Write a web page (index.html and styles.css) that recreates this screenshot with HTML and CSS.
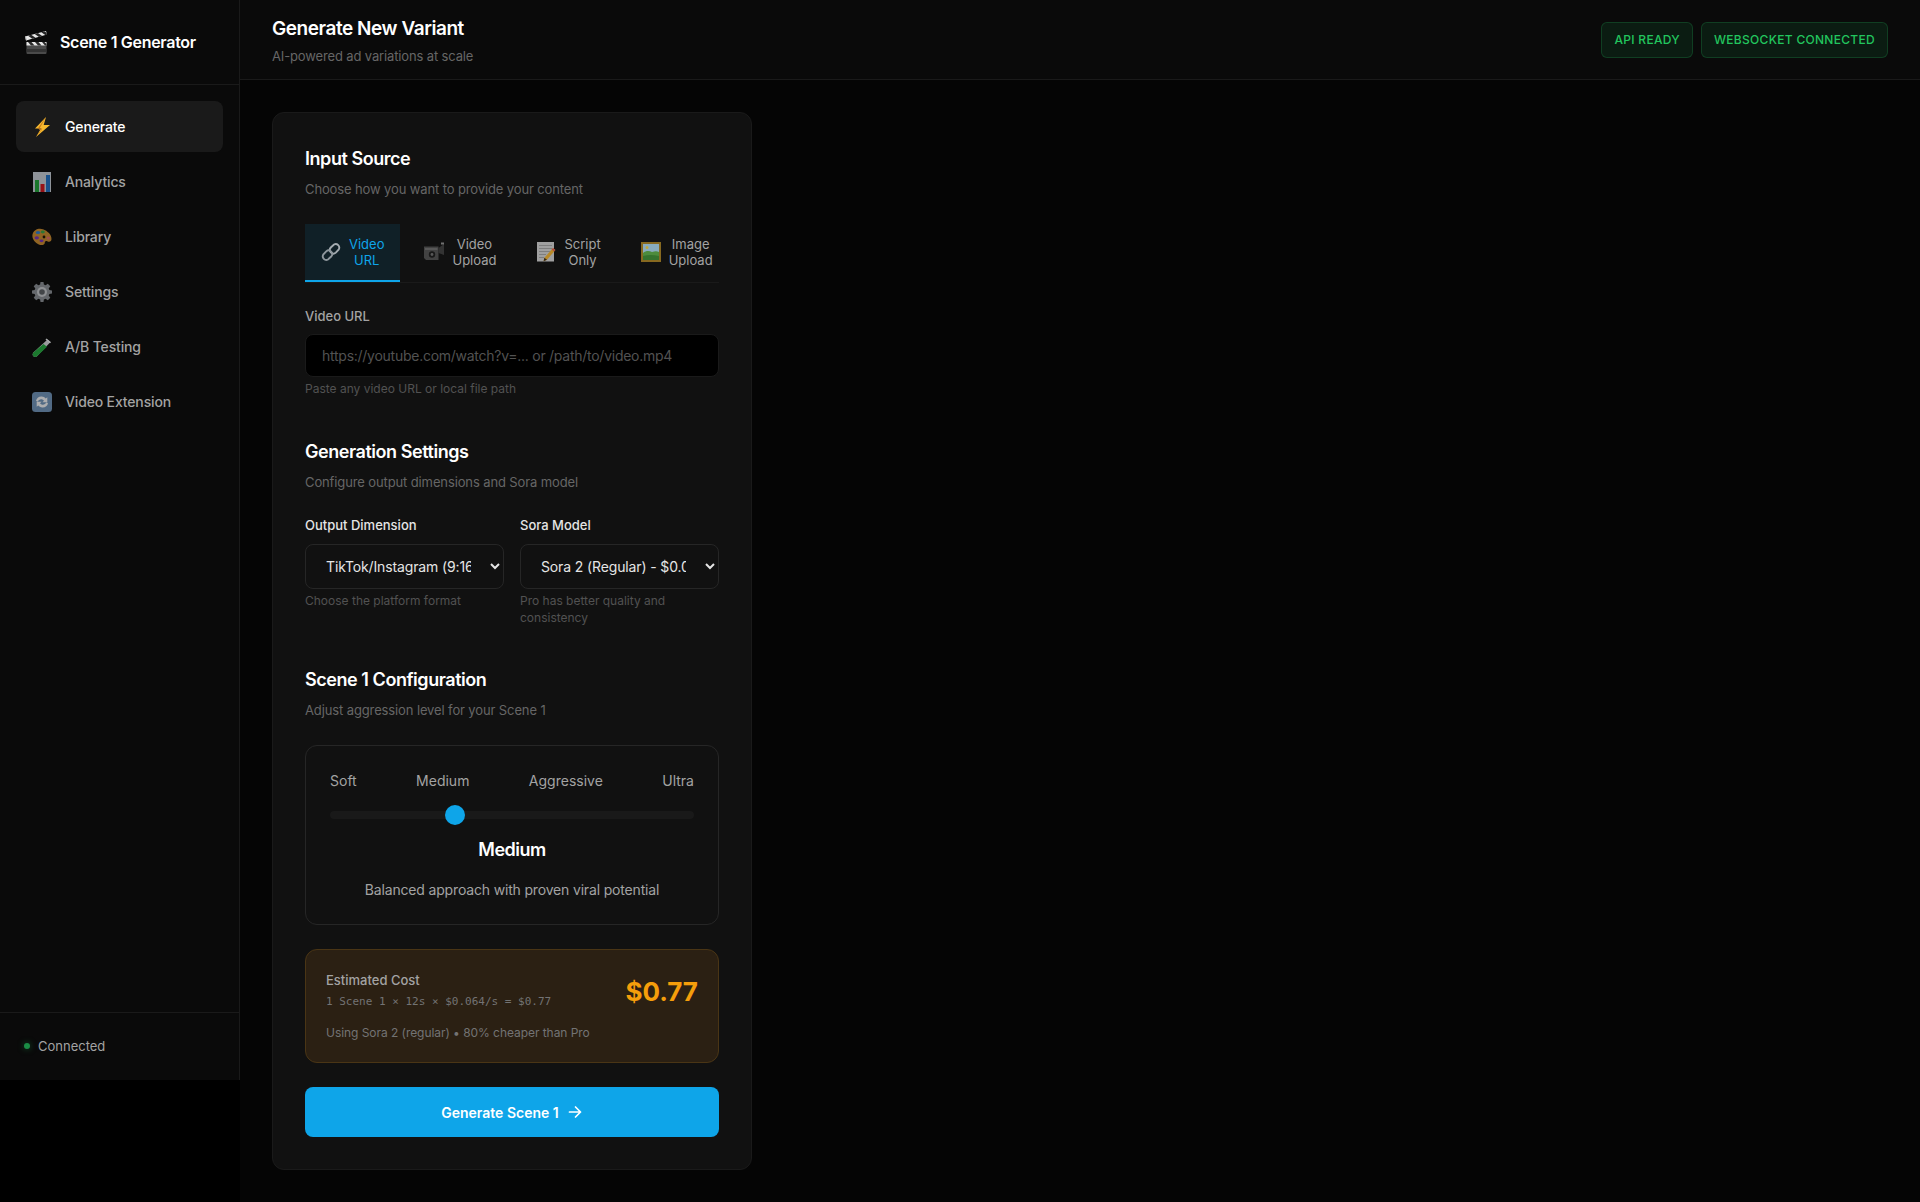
FILE: index.html
```html
<!DOCTYPE html>
<html lang="en">
<head>
<meta charset="utf-8">
<title>Scene 1 Generator</title>
<link rel="stylesheet" href="styles.css">
</head>
<body>
<div class="app">
  <aside class="sidebar">
    <div class="brand">
      <svg class="brand-icon" viewBox="0 0 24 24" aria-hidden="true">
        <rect x="2.500" y="12" width="20" height="12" rx="1" fill="#4a4a4a"/>
        <rect x="2.500" y="19" width="20" height="3" fill="#333"/>
        <rect x="2.500" y="12" width="20" height="3.500" fill="#e6e6e6"/>
        <path d="M4 12l3 3.500h3.500l-3-3.500zM11 12l3 3.500h3.500l-3-3.500zM18 12l3 3.500h1.500v-1.500l-2-2z" fill="#2a2a2a"/>
        <path d="M1 6.500L22 1l1 3.600L2 10.500z" fill="#e8e8e8"/>
        <path d="M4 5.700l4.300 3 3.200-.9-4.300-3zM10.700 3.900l4.300 3 3.200-.9-4.300-3zM17.300 2.200l4.300 3 1.400-.4-.5-2.100-1.800-1.300z" fill="#262626"/>
        <path d="M1 6.500l1 4 .8-.2-1-4.100z" fill="#aaa"/>
      </svg>
      <span class="brand-name">Scene 1 Generator</span>
    </div>
    <nav class="nav">
      <a class="nav-item is-active">
        <svg class="nav-icon" viewBox="0 0 20 20" aria-hidden="true"><path d="M14 0L3 11.500h6L4 20 18 8h-6.300z" fill="#f5b82e"/><path d="M14 0L5.800 11.500h4.400L4 20 9.900 12.800H6.800z" fill="#c9781a"/></svg>
        <span>Generate</span>
      </a>
      <a class="nav-item">
        <svg class="nav-icon" viewBox="0 0 20 20" aria-hidden="true"><rect x="1" y="0" width="18" height="20" fill="#c7ced6"/><rect x="3" y="8" width="4" height="12" fill="#22a53a"/><rect x="8.500" y="12" width="4" height="8" fill="#d2161e"/><rect x="14" y="3" width="4" height="17" fill="#1f6fc4"/></svg>
        <span>Analytics</span>
      </a>
      <a class="nav-item">
        <svg class="nav-icon" viewBox="0 0 20 20" aria-hidden="true"><path d="M.5 7.500C1.500 2.500 7 .8 11 2.300c4.500 1.700 8.500 5.200 8.500 9.700 0 2.800-2.300 3.300-4.300 2.200-1.400-.8-2.400.2-2.400 1.500 0 2.300-3.300 2.900-6 1.800C3 15.800-.3 12 .5 7.500z" fill="#c98a2e"/><ellipse cx="6" cy="5.500" rx="2.200" ry="1.600" fill="#2a7fd0"/><ellipse cx="10.800" cy="5" rx="2" ry="1.400" fill="#3aa648"/><ellipse cx="4.800" cy="10.800" rx="2.200" ry="1.600" fill="#7a35b5"/><ellipse cx="9.500" cy="13.800" rx="2" ry="1.400" fill="#7a35b5"/><ellipse cx="16.200" cy="11" rx="1.700" ry="1.600" fill="#e0696e"/><circle cx="12" cy="10" r="1.400" fill="#1a1205"/></svg>
        <span>Library</span>
      </a>
      <a class="nav-item">
        <svg class="nav-icon" viewBox="0 0 20 20" aria-hidden="true"><path d="M8.500 0h3l.4 2.600 1.700.7L15.800 1.700l2.500 2.500-1.600 2.200.7 1.700 2.600.4v3l-2.600.4-.7 1.700 1.600 2.200-2.500 2.500-2.200-1.600-1.700.7-.4 2.600h-3l-.4-2.600-1.700-.7-2.200 1.600-2.500-2.500 1.600-2.200-.7-1.700L0 11.500v-3l2.600-.4.7-1.700L1.700 4.200l2.500-2.500 2.200 1.600 1.700-.7z" fill="#8a8f94"/><circle cx="10" cy="10" r="5" fill="#c5c8cc"/><circle cx="10" cy="10" r="2.800" fill="#5a5e63"/></svg>
        <span>Settings</span>
      </a>
      <a class="nav-item">
        <svg class="nav-icon" viewBox="0 0 20 20" aria-hidden="true"><path d="M15.500 2.500l3 2.500L5 19.200c-1 1-2.500 1-3.600 0-1-1-1-2.500 0-3.600z" fill="#d7dadd"/><path d="M11.500 7l3.500 2.700L5 19.200c-1 1-2.500 1-3.600 0-1-1-1-2.500 0-3.600z" fill="#23a83e"/><path d="M14.500 1.500l4.500 3.700-1 1-4.500-3.700z" fill="#eceff1"/></svg>
        <span>A/B Testing</span>
      </a>
      <a class="nav-item">
        <svg class="nav-icon" viewBox="0 0 20 20" aria-hidden="true"><rect width="20" height="20" rx="3.500" fill="#6f93b8"/><path d="M4 9c.4-3 3-4.800 5.800-4.500 1.600.1 3 .9 3.900 2l1.600-1.300v5h-5l1.700-1.500c-.6-.8-1.400-1.300-2.400-1.400-1.700-.2-3.200.8-3.600 2.200zM16 11c-.4 3-3 4.800-5.800 4.500-1.600-.1-3-.9-3.900-2l-1.600 1.300v-5h5l-1.700 1.500c.6.8 1.400 1.300 2.400 1.400 1.700.2 3.200-.8 3.600-2.200z" fill="#f1f3f5"/></svg>
        <span>Video Extension</span>
      </a>
    </nav>
    <div class="sidebar-footer">
      <span class="status-dot"></span>
      <span>Connected</span>
    </div>
  </aside>

  <div class="main">
    <header class="topbar">
      <div>
        <h1 class="page-title">Generate New Variant</h1>
        <p class="page-sub">AI-powered ad variations at scale</p>
      </div>
      <div class="badges">
        <span class="badge">API Ready</span>
        <span class="badge">WebSocket Connected</span>
      </div>
    </header>

    <main class="content">
      <form class="card">
        <section class="section">
          <h2 class="section-title">Input Source</h2>
          <p class="section-desc">Choose how you want to provide your content</p>
          <div class="tabs">
            <button type="button" class="tab is-active">
              <svg class="tab-icon" viewBox="0 0 20 20" aria-hidden="true"><g fill="none" stroke-linecap="round"><path d="M13 2.500a3.600 3.600 0 0 1 4.800 4.900l-3 3.200a3.600 3.600 0 0 1-5-.2 3.600 3.600 0 0 1 0-4.900z" stroke="#c9ced3" stroke-width="1.900"/><path d="M7 17.500a3.600 3.600 0 0 1-4.800-4.900l3-3.200a3.600 3.600 0 0 1 5 .2 3.600 3.600 0 0 1 0 4.900z" stroke="#aeb4ba" stroke-width="1.900"/></g></svg>
              <span>Video URL</span>
            </button>
            <button type="button" class="tab">
              <svg class="tab-icon" viewBox="0 0 20 20" aria-hidden="true"><path d="M0 4.500h14.500v13.500H2l-2-2z" fill="#4f4f4f"/><path d="M14.500 6L20 2v11l-5.500-2z" fill="#3c3c3c"/><rect x="1" y="6" width="12.500" height="2" fill="#6a6a6a"/><circle cx="8" cy="12.500" r="3.200" fill="#1c1c1c"/><circle cx="8" cy="12.500" r="1.400" fill="#6a6a6a"/><rect x="17" y="0.500" width="3" height="2" fill="#8a8a8a"/></svg>
              <span>Video Upload</span>
            </button>
            <button type="button" class="tab">
              <svg class="tab-icon" viewBox="0 0 20 20" aria-hidden="true"><rect x="1" y="0" width="17" height="19.500" fill="#c4c4c4"/><path d="M3 3.500h13M3 6.500h13M3 9.500h11M3 12.500h7M3 15.500h5" stroke="#8f8f8f" stroke-width=".8"/><path d="M17 6l2.400 2-8.400 9.700-3.400 1.500.8-3.400z" fill="#e2a72e"/><path d="M17 6l2.400 2-1.300 1.500-2.400-2z" fill="#d4574e"/><path d="M7.600 19.200l.8-3.400 2.600 1.900z" fill="#3a2c1c"/></svg>
              <span>Script Only</span>
            </button>
            <button type="button" class="tab">
              <svg class="tab-icon" viewBox="0 0 20 20" aria-hidden="true"><rect y="0" width="20" height="20" fill="#a57f24"/><rect x="2" y="2" width="16" height="16" fill="#a8d3ea"/><circle cx="6" cy="5.500" r="1.500" fill="#ecd04a"/><path d="M2 11c3-2.500 6-2.500 9-1 3-1 5-1 7 0v8H2z" fill="#5cab48"/><path d="M2 14c5-1.500 10-1.500 16 0v4H2z" fill="#3f8c36"/></svg>
              <span>Image Upload</span>
            </button>
          </div>
          <div class="field">
            <label class="field-label" for="video-url">Video URL</label>
            <input class="text-input" id="video-url" type="text" placeholder="https://youtube.com/watch?v=... or /path/to/video.mp4">
            <p class="hint">Paste any video URL or local file path</p>
          </div>
        </section>

        <section class="section">
          <h2 class="section-title">Generation Settings</h2>
          <p class="section-desc">Configure output dimensions and Sora model</p>
          <div class="field-grid">
            <div class="field">
              <label class="field-label field-label-strong" for="dim">Output Dimension</label>
              <select class="select" id="dim"><option>TikTok/Instagram (9:16)</option></select>
              <p class="hint">Choose the platform format</p>
            </div>
            <div class="field">
              <label class="field-label field-label-strong" for="model">Sora Model</label>
              <select class="select" id="model"><option>Sora 2 (Regular) - $0.064/s</option></select>
              <p class="hint">Pro has better quality and consistency</p>
            </div>
          </div>
        </section>

        <section class="section">
          <h2 class="section-title">Scene 1 Configuration</h2>
          <p class="section-desc">Adjust aggression level for your Scene 1</p>
          <div class="level-box">
            <div class="level-labels">
              <span>Soft</span><span>Medium</span><span>Aggressive</span><span>Ultra</span>
            </div>
            <input class="slider" type="range" min="0" max="3" step="1" value="1" aria-label="Aggression level">
            <div class="level-value">Medium</div>
            <p class="level-desc">Balanced approach with proven viral potential</p>
          </div>
          <div class="cost-box">
            <div class="cost-row">
              <div>
                <div class="cost-title">Estimated Cost</div>
                <div class="cost-formula">1 Scene 1 × 12s × $0.064/s = $0.77</div>
              </div>
              <div class="cost-amount">$0.77</div>
            </div>
            <p class="cost-note">Using Sora 2 (regular) • 80% cheaper than Pro</p>
          </div>
          <button type="button" class="generate">
            <span>Generate Scene 1</span>
            <svg class="generate-arrow" viewBox="0 0 16 16" aria-hidden="true"><path d="M2.500 8h11M8.500 3l5 5-5 5" fill="none" stroke="#fff" stroke-width="1.700" stroke-linecap="round" stroke-linejoin="round"/></svg>
          </button>
        </section>
      </form>
    </main>
  </div>
</div>
</body>
</html>
```

FILE: styles.css
```css
* { box-sizing: border-box; }
html, body { margin: 0; padding: 0; background: #000; }
body { font-family: Inter, "Noto Sans", sans-serif; font-size: 14px; line-height: 1.5; color: #fff; }
h1, h2, p { margin: 0; }

.app { display: flex; align-items: flex-start; min-height: 1202px; }

.sidebar { width: 240px; height: 1080px; flex: none; display: flex; flex-direction: column; background: #0a0a0a; border-right: 1px solid #1a1a1a; }
.brand { height: 85px; display: flex; align-items: center; gap: 12px; padding: 0 24px; border-bottom: 1px solid #1a1a1a; }
.brand-icon { width: 24px; height: 24px; flex: none; }
.brand-name { font-size: 16px; font-weight: 600; letter-spacing: -.3px; }
.nav { flex: 1; display: flex; flex-direction: column; gap: 4px; padding: 16px; }
.nav-item { display: flex; align-items: center; gap: 13px; height: 51px; padding: 0 16px; border-radius: 8px; color: #a3a3a3; font-weight: 500; letter-spacing: -.15px; }
.nav-item.is-active { background: #1a1a1a; color: #fff; }
.nav-icon { width: 20px; height: 20px; flex: none; opacity: .7; }
.is-active .nav-icon { opacity: 1; }
.sidebar-footer { display: flex; align-items: center; gap: 8px; padding: 24px; border-top: 1px solid #1a1a1a; font-size: 13px; color: #a3a3a3; }
.status-dot { width: 6px; height: 6px; border-radius: 50%; background: #22c55e; opacity: .7; box-shadow: 0 0 6px rgba(34,197,94,.6); }

.main { flex: 1; min-width: 0; min-height: 1202px; background: #050505; }
.topbar { height: 80px; display: flex; justify-content: space-between; align-items: center; padding: 0 32px; background: #0a0a0a; border-bottom: 1px solid #1a1a1a; }
.page-title { font-size: 19px; font-weight: 600; line-height: 30px; letter-spacing: -.45px; margin-top: 1px; }
.page-sub { font-size: 13px; color: #666; margin-top: 3px; letter-spacing: -.14px; }
.badges { display: flex; gap: 8px; }
.badge { height: 36px; display: flex; align-items: center; padding: 0 12px; border: 1px solid rgba(34,197,94,.2); border-radius: 6px; background: rgba(34,197,94,.1); color: #22c55e; font-size: 12px; font-weight: 500; letter-spacing: .3px; text-transform: uppercase; }

.content { padding: 32px; }
.card { width: 480px; padding: 32px; background: #111; border: 1px solid #1a1a1a; border-radius: 12px; }
.section + .section { margin-top: 40px; }
.section-title { font-size: 18px; font-weight: 600; line-height: 1.5; margin-bottom: 8px; letter-spacing: -.45px; }
.section-desc { font-size: 13px; color: #666; margin-bottom: 24px; letter-spacing: -.12px; }

.tabs { display: flex; gap: 8px; border-bottom: 1px solid #1a1a1a; margin-bottom: 24px; }
.tab { flex: 1; display: flex; align-items: center; justify-content: center; gap: 8px; padding: 12px 16px; border: 0; border-bottom: 2px solid transparent; background: none; color: #a3a3a3; font: 400 13px/16px Inter, sans-serif; text-align: center; }
.tab.is-active { background: rgba(14,165,233,.1); border-bottom-color: #0ea5e9; color: #0ea5e9; }
.tab-icon { width: 20px; height: 20px; flex: none; opacity: .8; }

.field-label { display: block; font-size: 13px; font-weight: 500; color: #a3a3a3; margin-bottom: 8px; }
.field-label-strong { color: #e5e5e5; }
.text-input { display: block; width: 100%; padding: 12px 16px; background: #000; border: 1px solid #1a1a1a; border-radius: 8px; color: #fff; font: 400 14px Inter, sans-serif; letter-spacing: -.26px; outline: 0; }
.text-input::placeholder { color: #525252; opacity: 1; }
.hint { font-size: 12px; line-height: 1.4; color: #525252; margin-top: 4px; }

.field-grid { display: grid; grid-template-columns: 1fr 1fr; gap: 16px; }
.field-grid .field { min-width: 0; }
.select { display: block; width: 100%; height: 45px; padding: 12px 16px; color-scheme: dark; background: #111; border: 1px solid #262626; border-radius: 8px; color: #e5e5e5; font: 400 14px Inter, sans-serif; letter-spacing: -.13px; }

.level-box { padding: 24px; border: 1px solid #262626; border-radius: 12px; margin-bottom: 24px; }
.level-labels { display: flex; justify-content: space-between; color: #a3a3a3; margin-bottom: 14px; }
.slider { display: block; width: 100%; height: 20px; margin: 0 0 11px; padding: 0; background: none; appearance: none; -webkit-appearance: none; }
.slider::-webkit-slider-runnable-track { height: 8px; border-radius: 4px; background: #191919; }
.slider::-webkit-slider-thumb { -webkit-appearance: none; appearance: none; width: 20px; height: 20px; margin-top: -6px; border-radius: 50%; background: #0ea5e9; }
.level-value { font-size: 18px; font-weight: 600; text-align: center; margin-bottom: 16px; letter-spacing: -.5px; }
.level-desc { color: #a3a3a3; text-align: center; letter-spacing: -.17px; }

.cost-box { padding: 21.500px 20px 20px; background: #2b2013; border: 1px solid #4a3515; border-radius: 12px; margin-bottom: 24px; }
.cost-row { display: flex; justify-content: space-between; align-items: flex-start; }
.cost-title { font-size: 13px; font-weight: 500; color: #a3a3a3; }
.cost-formula { font-family: "DejaVu Sans Mono", monospace; font-size: 11px; color: #737373; margin-top: 3px; }
.cost-amount { font-size: 26px; line-height: 42px; font-weight: 700; color: #f59e0b; }
.cost-note { font-size: 12px; color: #737373; margin-top: 11px; letter-spacing: -.05px; }

.generate { width: 100%; height: 50px; display: flex; align-items: center; justify-content: center; gap: 8px; border: 0; border-radius: 8px; background: #0ea5e9; color: #fff; font: 600 14px Inter, sans-serif; }
.generate-arrow { width: 16px; height: 16px; flex: none; }
```
